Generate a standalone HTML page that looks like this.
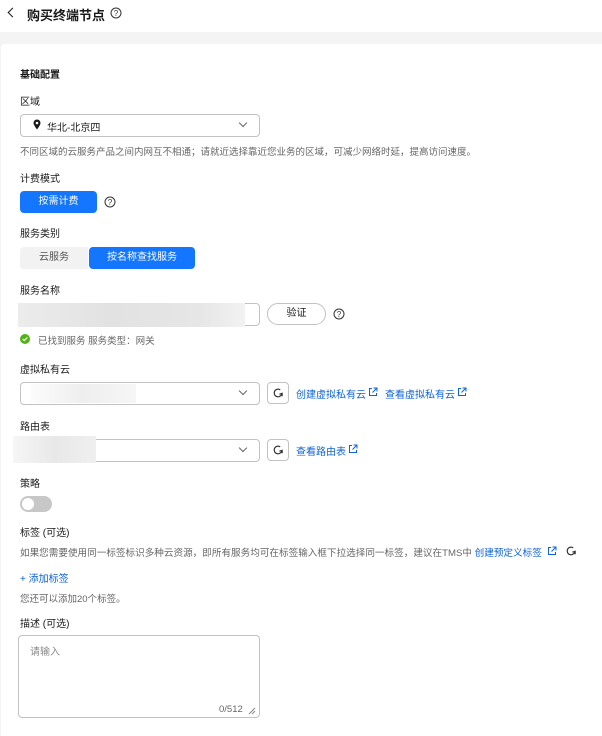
<!DOCTYPE html>
<html><head><meta charset="utf-8">
<style>
*{margin:0;padding:0;box-sizing:border-box}
html,body{width:602px;height:736px;overflow:hidden}
body{background:#f4f4f4;font-family:"Liberation Sans","Noto Sans CJK SC",sans-serif;font-size:10px;color:#191919;position:relative}
.hdr{position:absolute;left:0;top:0;width:602px;height:32px;background:#fff}
.card{position:absolute;left:1px;top:44px;width:610px;height:700px;background:#fff;border-radius:4px}
.a{position:absolute;white-space:nowrap}
.lbl{font-size:10px;color:#191919}
.hint{font-size:9.5px;color:#666}
.box{position:absolute;border:1px solid #c2c2c2;border-radius:4px;background:#fff}
.link{color:#0e62da;font-size:10px}
.blur{position:absolute;background:linear-gradient(90deg,#ececec,#e2e2e2 40%,#e6e6e6 80%,#f2f2f2)}
.chev{position:absolute;width:6px;height:6px;border-right:1.2px solid #666;border-bottom:1.2px solid #666;transform:rotate(45deg)}
.rf{position:absolute;width:22px;height:22px;border:1px solid #c2c2c2;border-radius:4px}
</style></head><body>
<div class="hdr"></div>
<div class="a" style="left:9px;top:9px;width:7px;height:7px;border-left:1.6px solid #191919;border-bottom:1.6px solid #191919;transform:rotate(45deg)"></div>
<div class="a" style="left:27px;top:5px;font-size:13px;font-weight:bold">购买终端节点</div>
<svg class="a" style="left:110px;top:7px" width="12" height="12" viewBox="0 0 12 12"><circle cx="6" cy="6" r="5" fill="none" stroke="#333" stroke-width="1"/><text x="6" y="9" font-size="8" text-anchor="middle" fill="#333" font-family="Liberation Sans">?</text></svg>
<div class="card"></div>

<div class="a lbl" style="left:20px;top:66px;font-weight:bold">基础配置</div>
<div class="a lbl" style="left:20px;top:93px">区域</div>
<div class="box" style="left:20px;top:114px;width:240px;height:23px"></div>
<svg class="a" style="left:33px;top:119px" width="8" height="11" viewBox="0 0 8 11"><path d="M4 10.5C4 10.5 0.5 6 0.5 4A3.5 3.5 0 0 1 7.5 4C7.5 6 4 10.5 4 10.5Z" fill="#191919"/><circle cx="4" cy="4" r="1.3" fill="#fff"/></svg>
<div class="a lbl" style="left:47px;top:119px">华北-北京四</div>
<div class="chev" style="left:240px;top:120px"></div>
<div class="a hint" style="left:20px;top:144px">不同区域的云服务产品之间内网互不相通；请就近选择靠近您业务的区域，可减少网络时延，提高访问速度。</div>

<div class="a lbl" style="left:20px;top:170px">计费模式</div>
<div class="a" style="left:20px;top:191px;width:77px;height:22px;background:#1476ff;border-radius:4px;color:#fff;font-size:10px;text-align:center;line-height:22px">按需计费</div>
<svg class="a" style="left:104px;top:196px" width="12" height="12" viewBox="0 0 12 12"><circle cx="6" cy="6" r="5" fill="none" stroke="#333"/><text x="6" y="9" font-size="8" text-anchor="middle" fill="#333">?</text></svg>

<div class="a lbl" style="left:20px;top:225px">服务类别</div>
<div class="a" style="left:20px;top:247px;width:68px;height:22px;background:#f2f2f2;border-radius:4px 0 0 4px;color:#555;font-size:10px;text-align:center;line-height:22px">云服务</div>
<div class="a" style="left:89px;top:247px;width:106px;height:22px;background:#1476ff;border-radius:4px;color:#fff;font-size:10px;text-align:center;line-height:22px">按名称查找服务</div>

<div class="a lbl" style="left:20px;top:282px">服务名称</div>
<div class="box" style="left:20px;top:303px;width:240px;height:23px"></div>
<div class="blur" style="left:18px;top:303px;width:227px;height:24px"></div>
<div class="a" style="left:267px;top:303px;width:59px;height:22px;border:1px solid #c2c2c2;border-radius:11px;font-size:10px;text-align:center;line-height:20px">验证</div>
<svg class="a" style="left:333px;top:308px" width="12" height="12" viewBox="0 0 12 12"><circle cx="6" cy="6" r="5" fill="none" stroke="#333"/><text x="6" y="9" font-size="8" text-anchor="middle" fill="#333">?</text></svg>
<svg class="a" style="left:20px;top:334px" width="10" height="10" viewBox="0 0 10 10"><circle cx="5" cy="5" r="5" fill="#50b415"/><path d="M2.7 5.1L4.3 6.6 7.3 3.6" fill="none" stroke="#fff" stroke-width="1.2"/></svg>
<div class="a hint" style="left:38px;top:333px">已找到服务 服务类型：网关</div>

<div class="a lbl" style="left:20px;top:361px">虚拟私有云</div>
<div class="box" style="left:20px;top:382px;width:240px;height:23px"></div>
<div class="blur" style="left:30px;top:384px;width:106px;height:19px;background:linear-gradient(90deg,#fcfcfc,#eeeeee 50%,#f6f6f6)"></div>
<div class="chev" style="left:240px;top:388px"></div>
<div class="rf" style="left:267px;top:382px"></div>
<svg class="a" style="left:272px;top:387px" width="12" height="12" viewBox="0 0 11 11"><path d="M9 5.5A3.5 3.5 0 1 1 7.5 2.6" fill="none" stroke="#333" stroke-width="1.1"/><path d="M9.3 8.5L9.3 5.8 6.8 6.6" fill="none" stroke="#333" stroke-width="1.1"/></svg>
<div class="a link" style="left:296px;top:386px">创建虚拟私有云</div>
<svg class="a" style="left:368px;top:387px" width="10" height="10" viewBox="0 0 10 10"><path d="M4 1.5H1.5V8.5H8.5V6M5.5 1H9V4.5M9 1L4.5 5.5" fill="none" stroke="#0e62da" stroke-width="1"/></svg>
<div class="a link" style="left:385px;top:386px">查看虚拟私有云</div>
<svg class="a" style="left:457px;top:387px" width="10" height="10" viewBox="0 0 10 10"><path d="M4 1.5H1.5V8.5H8.5V6M5.5 1H9V4.5M9 1L4.5 5.5" fill="none" stroke="#0e62da" stroke-width="1"/></svg>

<div class="a lbl" style="left:20px;top:418px">路由表</div>
<div class="box" style="left:20px;top:439px;width:240px;height:23px"></div>
<div class="blur" style="left:13px;top:436px;width:83px;height:27px;background:linear-gradient(90deg,#f6f6f6,#e8e8e8 50%,#efefef)"></div>
<div class="chev" style="left:240px;top:445px"></div>
<div class="rf" style="left:267px;top:439px"></div>
<svg class="a" style="left:272px;top:444px" width="12" height="12" viewBox="0 0 11 11"><path d="M9 5.5A3.5 3.5 0 1 1 7.5 2.6" fill="none" stroke="#333" stroke-width="1.1"/><path d="M9.3 8.5L9.3 5.8 6.8 6.6" fill="none" stroke="#333" stroke-width="1.1"/></svg>
<div class="a link" style="left:296px;top:443px">查看路由表</div>
<svg class="a" style="left:348px;top:444px" width="10" height="10" viewBox="0 0 10 10"><path d="M4 1.5H1.5V8.5H8.5V6M5.5 1H9V4.5M9 1L4.5 5.5" fill="none" stroke="#0e62da" stroke-width="1"/></svg>

<div class="a lbl" style="left:20px;top:475px">策略</div>
<div class="a" style="left:20px;top:496px;width:32px;height:16px;background:#c7c7c7;border-radius:8px"></div>
<div class="a" style="left:22px;top:498px;width:12px;height:12px;background:#fff;border-radius:50%"></div>

<div class="a lbl" style="left:20px;top:524px">标签 (可选)</div>
<div class="a hint" style="left:20px;top:545px;font-size:9.6px">如果您需要使用同一标签标识多种云资源，即所有服务均可在标签输入框下拉选择同一标签，建议在TMS中 <span class="link" style="font-size:9.6px">创建预定义标签</span></div>
<svg class="a" style="left:547px;top:546px" width="10" height="10" viewBox="0 0 10 10"><path d="M4 1.5H1.5V8.5H8.5V6M5.5 1H9V4.5M9 1L4.5 5.5" fill="none" stroke="#0e62da" stroke-width="1"/></svg>
<svg class="a" style="left:565px;top:545px" width="12" height="12" viewBox="0 0 11 11"><path d="M9 5.5A3.5 3.5 0 1 1 7.5 2.6" fill="none" stroke="#333" stroke-width="1.1"/><path d="M9.3 8.5L9.3 5.8 6.8 6.6" fill="none" stroke="#333" stroke-width="1.1"/></svg>
<div class="a link" style="left:20px;top:570px">+ 添加标签</div>
<div class="a hint" style="left:20px;top:591px">您还可以添加20个标签。</div>

<div class="a lbl" style="left:20px;top:615px">描述 (可选)</div>
<div class="box" style="left:18px;top:635px;width:242px;height:83px"></div>
<div class="a" style="left:30px;top:643px;font-size:10px;color:#8a8a8a">请输入</div>
<div class="a" style="left:219px;top:704px;font-size:9.5px;color:#666">0/512</div>
<svg class="a" style="left:248px;top:707px" width="8" height="8" viewBox="0 0 8 8"><path d="M1 7L7 1M4 7L7 4" stroke="#888" stroke-width="1"/></svg>
</body></html>
